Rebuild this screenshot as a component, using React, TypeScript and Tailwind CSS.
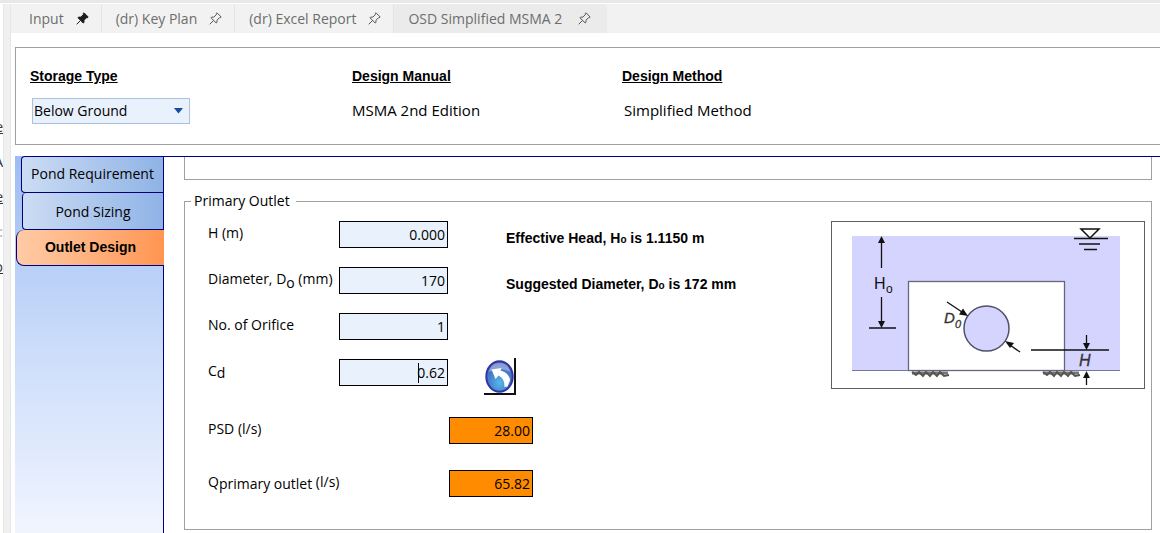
import { useState } from "react";

const tabs = [
  { title: "Input", pinned: true },
  { title: "(dr) Key Plan" },
  { title: "(dr) Excel Report" },
  { title: "OSD Simplified MSMA 2", active: true },
];

function PinIcon({ filled }: { filled?: boolean }) {
  return (
    <svg
      width="13"
      height="13"
      viewBox="0 0 13 13"
      fill={filled ? "#1e1e1e" : "none"}
      stroke={filled ? "#1e1e1e" : "#555"}
      strokeLinejoin="round"
    >
      <path d="M8 .8 12.2 5 11.3 5.9 10.5 5.7 8 8.2 8 10.4 7.2 11 2 5.8 2.7 5.1 4.8 5.1 7.4 2.6 7.1 1.7Z" />
      <path d="M4.5 8.5.7 12.3" fill="none" />
    </svg>
  );
}

function TabBar() {
  return (
    <nav className="flex h-[29px] items-stretch bg-[#f2f2f2] pl-1 text-[#6d6d6d]">
      {tabs.map((tab) => (
        <button
          key={tab.title}
          className={
            tab.active
              ? "flex items-center gap-4 rounded-t bg-[#ebebeb] pr-4 pl-[14px] text-[14px]"
              : "flex items-center gap-3 border-r border-[#e4e4e4] pr-3 pl-[14px] text-[14px]"
          }
        >
          <span>{tab.title}</span>
          <PinIcon filled={tab.pinned} />
        </button>
      ))}
    </nav>
  );
}

// Right edge of the collapsed project tree
function TreeEdge() {
  return (
    <div className="flex w-[3px] shrink-0 flex-col items-end overflow-hidden pt-[105px] text-[14px] leading-[35px] text-[#333]">
      <span className="underline">e</span>
      <span>A</span>
      <span className="underline">e</span>
      <span className="text-[#aaa]">:</span>
      <span className="underline">o</span>
    </div>
  );
}

const headingStyle = "font-['Liberation_Sans',sans-serif] text-[14px] leading-4 font-bold underline";

function DesignHeader() {
  const [storage, setStorage] = useState("Below Ground");
  return (
    <section className="flex h-[98px] border border-r-0 border-[#a0a0a0] pt-5 pl-[14px]">
      <div className="flex w-[322px] flex-col items-start gap-[14px]">
        <label htmlFor="storage" className={headingStyle}>
          Storage Type
        </label>
        <div className="relative ml-0.5 w-[158px]">
          <select
            id="storage"
            value={storage}
            onChange={(e) => setStorage(e.target.value)}
            className="block h-[26px] w-full appearance-none border border-[#abc1de] bg-[#e9f1fc] pl-px text-[14px] leading-5 outline-none"
          >
            <option>Below Ground</option>
            <option>Above Ground</option>
          </select>
          <svg className="pointer-events-none absolute top-[10px] right-[7px]" width="9" height="6" viewBox="0 0 9 6">
            <path d="M0 0h9L4.500 5.500Z" fill="#1a4a9c" />
          </svg>
        </div>
      </div>
      <div className="flex w-[270px] flex-col items-start gap-4">
        <h2 className={headingStyle}>Design Manual</h2>
        <p className="text-[15px] leading-5">MSMA 2nd Edition</p>
      </div>
      <div className="flex flex-col items-start gap-4">
        <h2 className={headingStyle}>Design Method</h2>
        <p className="pl-0.5 text-[15px] leading-5">Simplified Method</p>
      </div>
    </section>
  );
}

function SideTabs() {
  return (
    <aside className="flex w-[149px] shrink-0 flex-col items-end border-r border-[#00007f] bg-linear-to-b from-[#9dbdf3] via-[#cbdcfa] to-[#f1f5fe]">
      <button className="h-[37px] w-[142px] rounded-l border border-r-0 border-[#00007f] bg-linear-to-r from-[#ccdcf3] to-[#8fb3e6] pb-0.5 text-[14px]">
        Pond Requirement
      </button>
      <button className="h-[37px] w-[141px] rounded-l border-b border-l border-[#00007f] bg-linear-to-r from-[#ccdcf3] to-[#8fb3e6] text-[14px]">
        Pond Sizing
      </button>
      <button className="-mr-px h-9 w-[148px] rounded-l-lg border-b border-l border-[#00007f] bg-linear-to-r from-[#ffcba6] to-[#ff9550] font-['Liberation_Sans',sans-serif] text-[14px] font-bold">
        Outlet Design
      </button>
    </aside>
  );
}

const inputStyle =
  "block h-[27px] w-[109px] border border-black bg-[#e9f1fc] pr-0.5 text-right text-[14px] outline-none";
const resultStyle =
  "ml-[110px] h-[27px] w-[84px] border border-black bg-[#ff8c00] pr-0.5 text-right text-[14px] outline-none";
const labelStyle = "w-[131px] shrink-0 whitespace-nowrap pb-1 text-[14px] leading-5";
const noteStyle =
  "ml-[58px] whitespace-nowrap pt-2 font-['Liberation_Sans',sans-serif] text-[14px] leading-5 font-bold";

function ResetButton() {
  return (
    <button aria-label="Reset Cd" className="mt-2 ml-9 border-r-2 border-b-2 border-[#111]">
      <svg width="30" height="35" viewBox="0 0 30 35">
        <defs>
          <radialGradient id="ball" cx="0.5" cy="0.7" r="0.6">
            <stop offset="0" stopColor="#56b8ec" />
            <stop offset="0.6" stopColor="#4683cf" />
            <stop offset="1" stopColor="#4d68bd" />
          </radialGradient>
        </defs>
        <ellipse cx="15.500" cy="18.500" rx="13.200" ry="15.300" fill="url(#ball)" stroke="#3037a2" strokeWidth="2" />
        <path d="M4.500 14Q7 5 15.500 5T26.500 14Q15 8 4.500 14Z" fill="#fff" opacity="0.35" />
        <path
          d="M7.500 11.500 17.500 10 16.500 12.500Q25.500 15 26 22.500L23.500 28.500 20.500 29Q21 21 14.500 17.500L11.500 21Z"
          fill="#fff"
        />
      </svg>
    </button>
  );
}

function OutletForm() {
  return (
    <div className="flex w-[600px] shrink-0 flex-col gap-[19px]">
      <div className="flex h-[27px] items-center">
        <label htmlFor="h" className={labelStyle}>H (m)</label>
        <input id="h" className={inputStyle} defaultValue="0.000" />
        <p className={noteStyle}>
          Effective Head, H<span className="text-[10px]">o</span> is 1.1150 m
        </p>
      </div>
      <div className="flex h-[27px] items-center">
        <label htmlFor="diameter" className={labelStyle}>
          Diameter, D<span className="relative top-1">o</span> (mm)
        </label>
        <input id="diameter" className={inputStyle} defaultValue="170" />
        <p className={noteStyle}>
          Suggested Diameter, D<span className="text-[10px]">o</span> is 172 mm
        </p>
      </div>
      <div className="flex h-[27px] items-center">
        <label htmlFor="orifices" className={labelStyle}>No. of Orifice</label>
        <input id="orifices" className={inputStyle} defaultValue="1" />
      </div>
      <div className="flex h-[27px] items-center">
        <label htmlFor="cd" className={labelStyle}>
          C<span className="relative top-0.5">d</span>
        </label>
        <div className="relative">
          <input id="cd" className={inputStyle} defaultValue="0.62" />
          <span className="absolute top-1 right-[29px] h-5 w-px bg-black" />
        </div>
        <ResetButton />
      </div>
      <div className="mt-3 flex h-[27px] items-center">
        <label htmlFor="psd" className={labelStyle}>PSD (l/s)</label>
        <input id="psd" readOnly className={resultStyle} value="28.00" />
      </div>
      <div className="mt-[7px] flex h-[27px] items-center">
        <label htmlFor="q" className={labelStyle}>
          Q<span className="relative top-0.5">primary outlet</span> (l/s)
        </label>
        <input id="q" readOnly className={resultStyle} value="65.82" />
      </div>
    </div>
  );
}

function OutletDiagram() {
  return (
    <svg width="314" height="168" viewBox="1 1 312 166" className="shrink-0 border border-[#5f5f5f]">
      <rect x="21" y="15" width="268" height="134" fill="#d5d4fe" />
      <path d="M21 149.500H289" stroke="#77779a" />
      <rect x="77.500" y="60.500" width="156" height="89" fill="#fff" stroke="#66667e" strokeWidth="1.300" />
      <circle cx="155.500" cy="107.500" r="22.500" fill="#d5d4fe" stroke="#50506a" strokeWidth="1.500" />
      <g stroke="#111" strokeWidth="1.300" fill="none">
        <path d="M50.500 20V47M50.500 76V104M38 107H65" />
        <path d="M243 17.500H277M248 23H269M253 28.500H266" strokeWidth="1.500" />
        <path d="M250 8H268L259 17Z" fill="#fff" strokeWidth="1.500" />
        <path d="M116 81 134 93M189 131 176 122M200 129H278M255.500 114V124M255.500 155V164" />
      </g>
      <g fill="#111">
        <path d="M50.500 15 54 22H47ZM50.500 107 54 100H47ZM137 95 128 93.500 132 87.500ZM174 120 183 122 179 127ZM255.500 129 259 122H252ZM255.500 150 259 157H252Z" />
      </g>
      <g stroke="#55554f" strokeWidth="2" fill="none">
        <path d="M81 152h36M212 152h36" strokeWidth="3" stroke="#777" />
        <path d="m81 151 4 3 3-3 4 4 3-4 4 4 3-4 4 4 3-4 4 4 5-1M212 151l4 3 3-3 4 4 3-4 4 4 3-4 4 4 3-4 4 4 5-1" />
      </g>
      <g fontFamily="'Liberation Sans', sans-serif">
        <text x="43" y="68" fontSize="16" fill="#111">H</text>
        <text x="55" y="72" fontSize="12" fill="#111">o</text>
        <g fontStyle="italic" fill="#333" stroke="#333" strokeWidth="0.300">
          <text x="113" y="102" fontSize="15">D</text>
          <text x="124" y="107" fontSize="11">0</text>
          <text x="248" y="145" fontSize="16">H</text>
        </g>
      </g>
    </svg>
  );
}

export default function App() {
  return (
    <div className="flex min-h-screen flex-col overflow-hidden bg-white font-['Open_Sans',sans-serif] text-black">
      <div className="h-1 border-t-[3px] border-[#e8e8e8]" />
      <div className="flex flex-1">
        <TreeEdge />
        <div className="w-2 shrink-0 border-x border-[#e6e6e6] bg-[#f0f0f0]" />
        <main className="flex min-w-0 flex-1 flex-col">
          <TabBar />
          <div className="flex flex-1 flex-col gap-[11px] pt-[14px] pl-1">
            <DesignHeader />
            <div className="flex flex-1">
              <SideTabs />
              <div className="flex flex-1 flex-col border-t border-[#00007f] pr-2 pl-5">
                <div className="h-[23px] border border-t-0 border-[#a0a0a0]" />
                <fieldset className="mt-[10px] mb-1 flex border border-[#a0a0a0] px-[6px] pb-8">
                  <legend className="pr-[6px] pl-[3px] text-[14px] leading-[22px] whitespace-nowrap">
                    Primary Outlet
                  </legend>
                  <div className="flex flex-1 items-start justify-between pt-[9px] pl-[17px]">
                    <OutletForm />
                    <OutletDiagram />
                  </div>
                </fieldset>
              </div>
            </div>
          </div>
        </main>
      </div>
    </div>
  );
}
